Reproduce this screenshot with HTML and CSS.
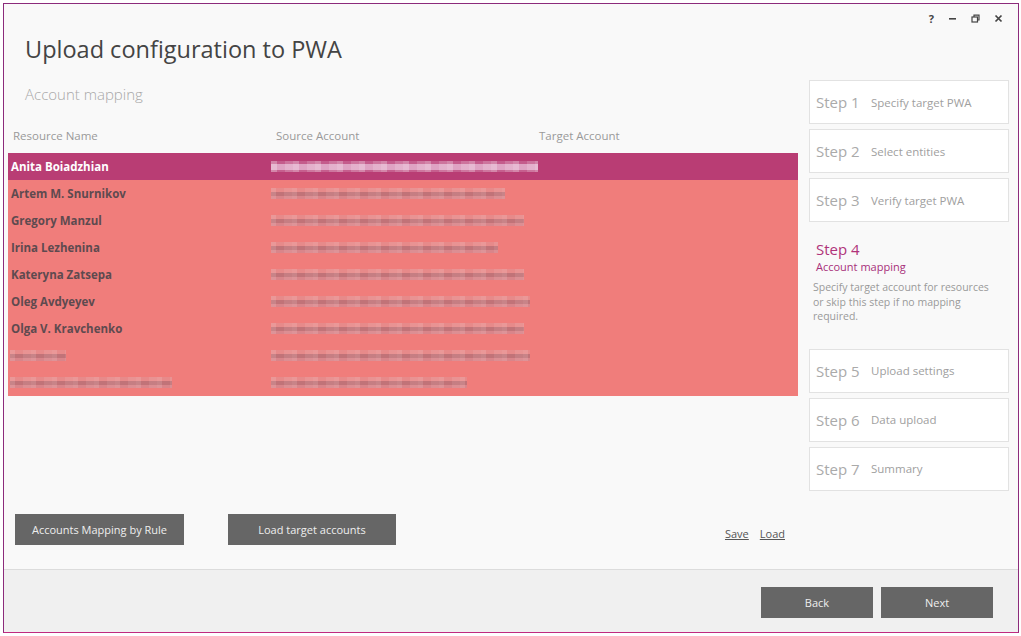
FILE: index.html
```html
<!DOCTYPE html>
<html lang="en">
<head>
    <meta charset="UTF-8">
    <title>Upload configuration to PWA</title>
    <link rel="stylesheet" href="styles.css">
</head>
<body>
    <div class="window">
        <div class="main">
            <!-- window buttons -->
            <div class="controls">
                <span class="ctl help">?</span>
                <svg class="ctl" viewBox="0 0 9 9"><rect x="1" y="4" width="7" height="1.6" fill="#444"/></svg>
                <svg class="ctl" viewBox="0 0 9 9"><rect x="1" y="3" width="5.5" height="5" fill="none" stroke="#444" stroke-width="1.2"/><path d="M3 3V1.2h5V6H6.5" fill="none" stroke="#444" stroke-width="1.2"/></svg>
                <svg class="ctl" viewBox="0 0 9 9"><path d="M1.5 1.5l6 6M7.5 1.5l-6 6" stroke="#444" stroke-width="1.7"/></svg>
            </div>
            <h1 class="title">Upload configuration to PWA</h1>

            <div class="content">
                <div class="left">
                    <div class="subtitle">Account mapping</div>
                    <div class="thead">
                        <div>Resource Name</div>
                        <div>Source Account</div>
                        <div>Target Account</div>
                    </div>
                    <div class="rows">
                        <div class="row selected">
                            <div class="name">Anita Boiadzhian</div>
                            <div><span class="blur wide" style="width: 267px"></span></div>
                            <div></div>
                        </div>
                        <div class="row">
                            <div class="name">Artem M. Snurnikov</div>
                            <div><span class="blur" style="width: 234px"></span></div>
                            <div></div>
                        </div>
                        <div class="row">
                            <div class="name">Gregory Manzul</div>
                            <div><span class="blur" style="width: 253px"></span></div>
                            <div></div>
                        </div>
                        <div class="row">
                            <div class="name">Irina Lezhenina</div>
                            <div><span class="blur" style="width: 227px"></span></div>
                            <div></div>
                        </div>
                        <div class="row">
                            <div class="name">Kateryna Zatsepa</div>
                            <div><span class="blur" style="width: 253px"></span></div>
                            <div></div>
                        </div>
                        <div class="row">
                            <div class="name">Oleg Avdyeyev</div>
                            <div><span class="blur" style="width: 259px"></span></div>
                            <div></div>
                        </div>
                        <div class="row">
                            <div class="name">Olga V. Kravchenko</div>
                            <div><span class="blur" style="width: 253px"></span></div>
                            <div></div>
                        </div>
                        <div class="row">
                            <div class="name"><span class="blur" style="width: 56px"></span></div>
                            <div><span class="blur" style="width: 259px"></span></div>
                            <div></div>
                        </div>
                        <div class="row">
                            <div class="name"><span class="blur" style="width: 162px"></span></div>
                            <div><span class="blur" style="width: 196px"></span></div>
                            <div></div>
                        </div>
                    </div>

                    <div class="actions">
                        <button class="btn rule">Accounts Mapping by Rule</button>
                        <button class="btn load">Load target accounts</button>
                        <div class="links">
                            <a href="#">Save</a>
                            <a href="#">Load</a>
                        </div>
                    </div>
                </div>

                <div class="steps">
                    <div class="step"><span class="num">Step 1</span><span class="label">Specify target PWA</span></div>
                    <div class="step"><span class="num">Step 2</span><span class="label">Select entities</span></div>
                    <div class="step"><span class="num">Step 3</span><span class="label">Verify target PWA</span></div>
                    <div class="step-active">
                        <div class="num">Step 4</div>
                        <div class="label">Account mapping</div>
                        <p class="desc">Specify target account for resources or skip this step if no mapping required.</p>
                    </div>
                    <div class="step"><span class="num">Step 5</span><span class="label">Upload settings</span></div>
                    <div class="step"><span class="num">Step 6</span><span class="label">Data upload</span></div>
                    <div class="step"><span class="num">Step 7</span><span class="label">Summary</span></div>
                </div>
            </div>
        </div>

        <div class="footer">
            <button class="btn nav">Back</button>
            <button class="btn nav">Next</button>
        </div>
    </div>
</body>
</html>
```

FILE: styles.css
```css
* {
    margin: 0;
    padding: 0;
    box-sizing: border-box;
    font-family: 'Open Sans', 'Noto Sans', sans-serif;
}

body {
    background: #ffffff;
}

.window {
    width: 1016px;
    height: 630px;
    margin: 3px 0 0 3px;
    border: 1px solid #8c2b7b;
    border-bottom-color: #c02a80;
    display: flex;
    flex-direction: column;
    background: #f9f9f9;
}

.main {
    flex: 1;
    display: flex;
    flex-direction: column;
}

.controls {
    height: 29px;
    display: flex;
    justify-content: flex-end;
    align-items: center;
    gap: 14px;
    padding: 0 15px 0 0;
}

.ctl {
    width: 9px;
    height: 9px;
}

.help {
    width: auto;
    height: auto;
    font-size: 11px;
    font-weight: 700;
    color: #444;
    line-height: 9px;
}

.title {
    font-size: 23.5px;
    font-weight: 400;
    line-height: 32px;
    color: #444;
    margin-left: 21px;
}

.content {
    flex: 1;
    display: flex;
    gap: 11px;
    padding: 11px 9px 0 4px;
}

.left {
    width: 790px;
    display: flex;
    flex-direction: column;
}

.subtitle {
    font-size: 15px;
    font-weight: 300;
    color: #a8a8a8;
    line-height: 20px;
    margin: 8px 0 0 17px;
}

.thead {
    display: grid;
    grid-template-columns: 263px 263px 1fr;
    height: 20px;
    line-height: 20px;
    margin: 22px 0 7px;
    font-size: 11.5px;
    color: #999;
}

.thead div {
    padding-left: 5px;
}

.rows {
    background: #f07d7b;
}

.row {
    display: grid;
    grid-template-columns: 263px 263px 1fr;
    height: 27px;
    align-items: center;
    font-size: 11.5px;
    font-weight: 700;
    color: #5e4a4f;
}

.row.selected {
    background: #b93d74;
    color: #fff;
}

.row .name {
    padding-left: 3px;
}

.row .name .blur {
    margin-left: -1px;
}

.blur {
    display: block;
    height: 11px;
    background:
        repeating-linear-gradient(90deg, rgba(255,255,255,0.12) 0 5px, rgba(0,0,0,0) 5px 13px, rgba(255,255,255,0.08) 13px 21px),
        linear-gradient(#e78a8a 0 4px, #c17378 4px 8px, #d9858a 8px 11px);
}

.blur.wide {
    background:
        repeating-linear-gradient(90deg, rgba(255,255,255,0.25) 0 6px, rgba(255,255,255,0) 6px 14px, rgba(255,255,255,0.15) 14px 22px),
        linear-gradient(#c45c8c 0 3px, #dfa3c3 3px 9px, #c65f8e 9px 11px);
}

.actions {
    margin-top: auto;
    margin-bottom: 24px;
    display: flex;
    align-items: center;
    padding-left: 7px;
}

.btn {
    height: 31px;
    border: none;
    background: #666;
    color: #eee;
    font-size: 11px;
}

.rule {
    width: 169px;
}

.load {
    width: 168px;
    margin-left: 44px;
}

.links {
    margin-left: auto;
    margin-right: 13px;
    padding-top: 7px;
    display: flex;
    gap: 11px;
}

.links a {
    font-size: 11px;
    color: #555;
}

.steps {
    width: 200px;
    padding-top: 4px;
    display: flex;
    flex-direction: column;
    gap: 5px;
}

.step {
    height: 44px;
    background: #fff;
    border: 1px solid #e2e2e2;
    display: flex;
    align-items: center;
    padding-left: 6px;
}

.step .num {
    font-size: 15px;
    color: #aaa;
    width: 55px;
}

.step .label {
    font-size: 11.5px;
    color: #a0a0a0;
}

.step-active {
    padding: 12px 0 20px 7px;
}

.step-active .num {
    font-size: 15px;
    line-height: 20px;
    color: #b0337a;
}

.step-active .label {
    font-size: 11px;
    line-height: 16px;
    color: #a8307a;
}

.step-active .desc {
    margin: 5px 0 0 -3px;
    width: 182px;
    font-size: 10.5px;
    line-height: 14.5px;
    color: #999;
}

.footer {
    height: 63px;
    background: #f0f0f0;
    border-top: 1px solid #dcdcdc;
    display: flex;
    justify-content: flex-end;
    gap: 8px;
    padding: 17px 25px 0 0;
}

.nav {
    width: 112px;
}
```
